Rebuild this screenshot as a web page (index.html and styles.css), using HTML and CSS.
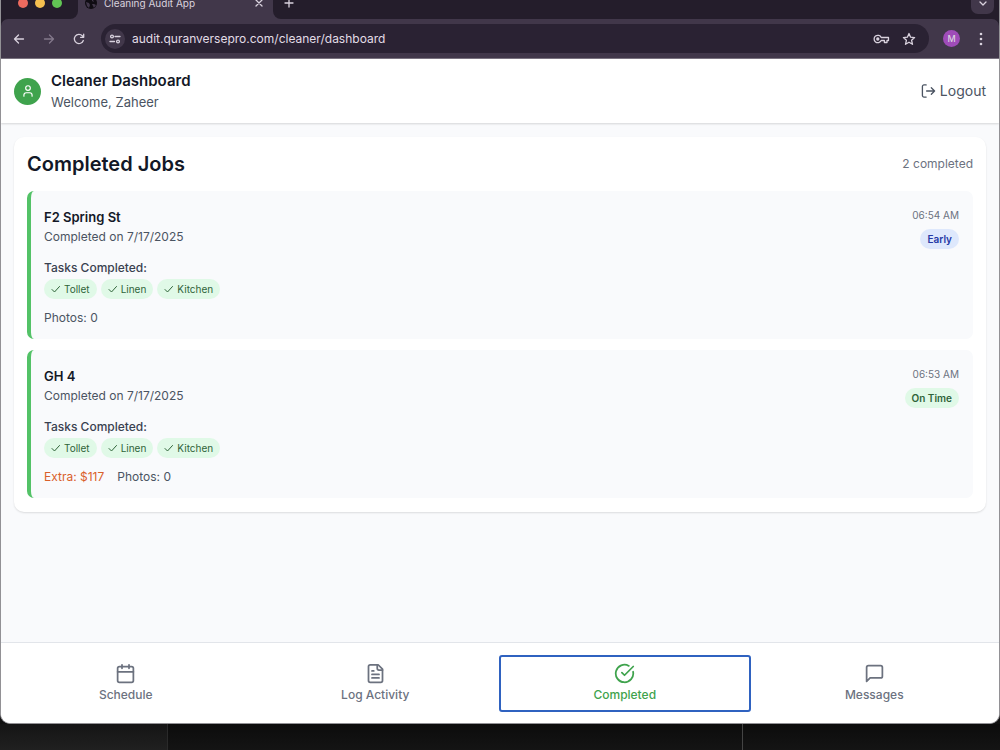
FILE: index.html
```html
<!DOCTYPE html>
<html lang="en">
<head>
    <meta charset="UTF-8">
    <meta name="viewport" content="width=device-width, initial-scale=1.0">
    <title>Cleaning Audit App</title>
    <link rel="stylesheet" href="styles.css">
</head>
<body>
    <div class="window">
        <!-- Browser chrome -->
        <div class="chrome">
            <div class="tabstrip">
                <div class="lights">
                    <span class="light red"></span>
                    <span class="light yellow"></span>
                    <span class="light green"></span>
                </div>
                <div class="tab">
                    <svg class="favicon" viewBox="0 0 14 14"><circle cx="7" cy="7" r="6" fill="#0f0c13"/><path d="M2 6l3 1 1 2-1 3-2-2zM8 1l3 1-2 2 1 2-2-1zM8 8l2 0 2 1-2 3-1-2z" fill="#41374a"/></svg>
                    <span class="tab-title">Cleaning Audit App</span>
                    <button class="tab-btn" aria-label="Close tab"><svg width="10" height="10" viewBox="0 0 10 10"><path d="M2 2l6 6M8 2l-6 6"/></svg></button>
                </div>
                <div class="strip-rest">
                    <button class="tab-btn" aria-label="New tab"><svg width="12" height="12" viewBox="0 0 12 12"><path d="M6 2v8M2 6h8"/></svg></button>
                    <button class="tab-search" aria-label="Search tabs"><svg width="10" height="10" viewBox="0 0 10 10"><path d="M2 4l3 3 3-3"/></svg></button>
                </div>
            </div>
            <div class="toolbar">
                <button class="tool" aria-label="Back"><svg width="14" height="14" viewBox="0 0 14 14"><path d="M11.500 7H2.500M6.500 3L2.500 7l4 4"/></svg></button>
                <button class="tool dim" aria-label="Forward"><svg width="14" height="14" viewBox="0 0 14 14"><path d="M2.500 7h9M7.500 3l4 4-4 4"/></svg></button>
                <button class="tool" aria-label="Reload"><svg width="14" height="14" viewBox="0 0 14 14"><path d="M11.300 8.500A4.600 4.600 0 1 1 10.300 3.800L11.500 5M11.700 2.200v3.100H8.600"/></svg></button>
                <div class="address">
                    <button class="site-info" aria-label="Site information"><svg width="12" height="12" viewBox="0 0 12 12"><circle cx="3" cy="3.500" r="1.400"/><path d="M6 3.500h5M1 8.500h4.500"/><circle cx="9" cy="8.500" r="1.400"/></svg></button>
                    <input class="url" type="text" aria-label="Address" value="audit.quranversepro.com/cleaner/dashboard">
                    <button class="in-bar" aria-label="Passwords"><svg width="17" height="12" viewBox="0 0 17 12"><path d="M8.200 4.500H15.500v3H14v2h-2.600v-2H8.200a3.700 3.700 0 1 1 0-3z"/><circle cx="4.800" cy="6" r="1" fill="currentColor"/></svg></button>
                    <button class="in-bar" aria-label="Bookmark"><svg width="14" height="14" viewBox="0 0 14 14"><path d="M7 1.500l1.600 3.700 4 .4-3 2.700.9 4L7 10.200l-3.500 2.100.9-4-3-2.700 4-.4z"/></svg></button>
                </div>
                <button class="profile" aria-label="Profile">M</button>
                <button class="menu" aria-label="Menu"><svg width="4" height="14" viewBox="0 0 4 14"><g fill="currentColor" stroke="none"><circle cx="2" cy="2" r="1.300"/><circle cx="2" cy="7" r="1.300"/><circle cx="2" cy="12" r="1.300"/></g></svg></button>
            </div>
        </div>

        <!-- Page header -->
        <header class="header">
            <div class="avatar"><svg width="14" height="14" viewBox="0 0 24 24"><path d="M19 21v-2a4 4 0 0 0-4-4H9a4 4 0 0 0-4 4v2"/><circle cx="12" cy="7" r="4"/></svg></div>
            <div class="who">
                <h1>Cleaner Dashboard</h1>
                <p>Welcome, Zaheer</p>
            </div>
            <button class="logout"><svg width="16" height="16" viewBox="0 0 16 16"><path d="M5.500 1.500H3.200a1.700 1.700 0 0 0-1.700 1.700v9.600a1.700 1.700 0 0 0 1.700 1.700H5.500M6 8h8.500M11 4.500L14.500 8 11 11.500"/></svg>Logout</button>
        </header>

        <!-- Completed jobs -->
        <main class="main">
            <section class="card">
                <div class="card-head">
                    <h2>Completed Jobs</h2>
                    <span class="count">2 completed</span>
                </div>

                <article class="job">
                    <div class="job-head">
                        <div>
                            <h3>F2 Spring St</h3>
                            <p>Completed on 7/17/2025</p>
                        </div>
                        <div class="job-status">
                            <span class="time">06:54 AM</span>
                            <span class="badge early">Early</span>
                        </div>
                    </div>
                    <p class="tasks-label">Tasks Completed:</p>
                    <ul class="tasks">
                        <li><svg width="10" height="10" viewBox="0 0 10 10"><path d="M1 5.500L3.500 8 8.500 2.500"/></svg>Tollet</li>
                        <li><svg width="10" height="10" viewBox="0 0 10 10"><path d="M1 5.500L3.500 8 8.500 2.500"/></svg>Linen</li>
                        <li><svg width="10" height="10" viewBox="0 0 10 10"><path d="M1 5.500L3.500 8 8.500 2.500"/></svg>Kitchen</li>
                    </ul>
                    <div class="job-foot">
                        <span>Photos: 0</span>
                    </div>
                </article>

                <article class="job">
                    <div class="job-head">
                        <div>
                            <h3>GH 4</h3>
                            <p>Completed on 7/17/2025</p>
                        </div>
                        <div class="job-status">
                            <span class="time">06:53 AM</span>
                            <span class="badge on-time">On Time</span>
                        </div>
                    </div>
                    <p class="tasks-label">Tasks Completed:</p>
                    <ul class="tasks">
                        <li><svg width="10" height="10" viewBox="0 0 10 10"><path d="M1 5.500L3.500 8 8.500 2.500"/></svg>Tollet</li>
                        <li><svg width="10" height="10" viewBox="0 0 10 10"><path d="M1 5.500L3.500 8 8.500 2.500"/></svg>Linen</li>
                        <li><svg width="10" height="10" viewBox="0 0 10 10"><path d="M1 5.500L3.500 8 8.500 2.500"/></svg>Kitchen</li>
                    </ul>
                    <div class="job-foot">
                        <span class="extra">Extra: $117</span>
                        <span>Photos: 0</span>
                    </div>
                </article>
            </section>
        </main>

        <!-- Bottom navigation -->
        <nav class="bottom-nav">
            <button class="nav-item"><svg width="21" height="21" viewBox="0 0 24 24"><path d="M8 2v4M16 2v4M3 10h18"/><rect x="3" y="4" width="18" height="18" rx="2"/></svg>Schedule</button>
            <button class="nav-item"><svg width="21" height="21" viewBox="0 0 24 24"><path d="M15 2H6a2 2 0 0 0-2 2v16a2 2 0 0 0 2 2h12a2 2 0 0 0 2-2V7z"/><path d="M14 2v4a2 2 0 0 0 2 2h4M10 9H8M16 13H8M16 17H8"/></svg>Log Activity</button>
            <button class="nav-item active"><svg width="21" height="21" viewBox="0 0 24 24"><path d="M21.800 10A10 10 0 1 1 17 3.340"/><path d="M9 11l3 3L22 4"/></svg>Completed</button>
            <button class="nav-item"><svg width="21" height="21" viewBox="0 0 24 24"><path d="M21 15a2 2 0 0 1-2 2H7l-4 4V5a2 2 0 0 1 2-2h14a2 2 0 0 1 2 2z"/></svg>Messages</button>
        </nav>
    </div>

    <!-- Windows behind the browser -->
    <div class="desktop">
        <div class="pane side"></div>
        <div class="pane"></div>
        <div class="pane last"></div>
    </div>
</body>
</html>
```
FILE: styles.css
```css
* {
    box-sizing: border-box;
}
body {
    margin: 0;
    min-height: 100vh;
    display: flex;
    flex-direction: column;
    font-family: Inter, "Liberation Sans", sans-serif;
    background: #111111;
}
h1, h2, h3, p, ul {
    margin: 0;
    padding: 0;
}
button {
    display: flex;
    align-items: center;
    justify-content: center;
    padding: 0;
    border: none;
    background: none;
    color: inherit;
    font-family: inherit;
    cursor: pointer;
}
svg {
    flex-shrink: 0;
    fill: none;
    stroke: currentColor;
    stroke-width: 2;
    stroke-linecap: round;
    stroke-linejoin: round;
}
.window {
    flex: 1;
    display: flex;
    flex-direction: column;
    overflow: hidden;
    border: 1px solid #929195;
    border-top: none;
    border-radius: 0 0 10px 10px;
    background: #f9fafc;
}

/* Browser chrome */
.chrome {
    background: #241d2b;
    color: #d9d2de;
    border-bottom: 1px solid #7a7380;
}
.chrome svg {
    stroke-width: 1.3;
}
.tabstrip {
    display: flex;
    align-items: flex-end;
    height: 19px;
    overflow: hidden;
    background: linear-gradient(90deg, #241d2b 20px, #41374a 20px, #41374a 60%, #241d2b 60%);
}
.lights, .tab, .strip-rest {
    display: flex;
    align-items: center;
    height: 32px;
}
.lights {
    width: 77px;
    padding-left: 17px;
    gap: 7px;
    background: #241d2b;
    border-bottom-right-radius: 8px;
}
.light {
    width: 10px;
    height: 10px;
    border-radius: 50%;
}
.red {
    background: #ed6a5e;
}
.yellow {
    background: #f5bf4f;
}
.green {
    background: #61c554;
}
.tab {
    width: 195px;
    padding: 0 8px 0 6px;
    gap: 6px;
    background: #41374a;
}
.chrome .favicon {
    width: 14px;
    height: 14px;
    stroke: none;
}
.tab-title {
    flex: 1;
    font-size: 10px;
    line-height: 14px;
    white-space: nowrap;
}
.tab-btn {
    width: 12px;
    height: 12px;
}
.strip-rest {
    flex: 1;
    justify-content: space-between;
    padding: 0 5px 0 10px;
    background: #241d2b;
    border-bottom-left-radius: 8px;
}
.tab-search {
    width: 23px;
    height: 22px;
    border-radius: 7px;
    background: #41374a;
}
.toolbar {
    display: flex;
    align-items: center;
    height: 39px;
    padding: 0 10px 0 3px;
    border-radius: 7px 7px 0 0;
    background: #41374a;
}
.tool {
    width: 30px;
    height: 28px;
}
.dim {
    color: #83798b;
}
.address {
    flex: 1;
    display: flex;
    align-items: center;
    height: 29px;
    margin: 0 14px 0 7px;
    padding: 0 13px 0 4px;
    border-radius: 15px;
    background: #2a2233;
}
.site-info {
    width: 20px;
    height: 20px;
    border-radius: 50%;
    background: #41374a;
}
.url {
    flex: 1;
    min-width: 0;
    padding: 0 7px;
    border: none;
    outline: none;
    background: none;
    color: #e2dde6;
    font-family: inherit;
    font-size: 12px;
}
.in-bar {
    margin-left: 12px;
}
.profile {
    width: 17px;
    height: 17px;
    border-radius: 50%;
    background: #9f4cb8;
    font-size: 9px;
    font-weight: 500;
}
.menu {
    width: 16px;
    height: 20px;
    margin-left: 13px;
}

/* Page header */
.header {
    display: flex;
    align-items: center;
    gap: 10px;
    padding: 11px 13px;
    background: #ffffff;
    box-shadow: 0 1px 2px rgba(0, 0, 0, 0.15);
}
.avatar {
    display: flex;
    align-items: center;
    justify-content: center;
    width: 27px;
    height: 27px;
    border-radius: 50%;
    background: #3fa34d;
    color: #ffffff;
}
.who {
    flex: 1;
}
h1 {
    font-size: 15px;
    font-weight: 600;
    line-height: 22px;
    color: #131827;
}
.who p {
    font-size: 13px;
    line-height: 20px;
    color: #4b5462;
}
.logout {
    gap: 4px;
    font-size: 14px;
    line-height: 20px;
    color: #4b5462;
}
.logout svg {
    width: 15px;
    stroke-width: 1.4;
}

/* Completed jobs */
.main {
    flex: 1;
    padding: 14px 13px;
}
.card {
    display: flex;
    flex-direction: column;
    gap: 11px;
    padding: 13px 13px 14px;
    border-radius: 10px;
    background: #ffffff;
    box-shadow: 0 1px 2px rgba(0, 0, 0, 0.12);
}
.card-head {
    display: flex;
    align-items: center;
    justify-content: space-between;
    padding-bottom: 2px;
}
h2 {
    font-size: 20px;
    font-weight: 600;
    line-height: 28px;
    color: #131827;
}
.count {
    font-size: 12px;
    line-height: 18px;
    color: #6c727f;
}
.job {
    padding: 16px 14px 12px 13px;
    border-left: 4px solid #53c267;
    border-radius: 7px;
    background: #f9fafc;
    font-size: 12px;
    line-height: 18px;
    color: #4b5462;
}
.job-head {
    display: flex;
    align-items: flex-start;
    justify-content: space-between;
    margin-bottom: 10px;
}
h3 {
    font-size: 13px;
    font-weight: 600;
    line-height: 21px;
    color: #131827;
}
.job-status {
    display: flex;
    flex-direction: column;
    align-items: flex-end;
    gap: 6px;
}
.time {
    font-size: 10px;
    line-height: 16px;
    color: #6c727f;
}
.badge {
    padding: 0 7px;
    border-radius: 10px;
    font-size: 10px;
    font-weight: 600;
    line-height: 20px;
}
.early {
    background: #dee8fc;
    color: #263aa5;
}
.on-time {
    background: #e0f9e7;
    color: #2f6439;
}
.tasks-label {
    margin-bottom: 2px;
    font-weight: 500;
    color: #394150;
}
.tasks {
    display: flex;
    gap: 4px;
    margin-bottom: 10px;
    list-style: none;
}
.tasks li {
    display: flex;
    align-items: center;
    gap: 3px;
    padding: 0 7px;
    border-radius: 10px;
    background: #e0f9e7;
    color: #2f6439;
    font-size: 10px;
    line-height: 20px;
}
.tasks svg {
    stroke-width: 1;
}
.job-foot {
    display: flex;
    gap: 13px;
}
.extra {
    color: #d9602b;
}

/* Bottom navigation */
.bottom-nav {
    display: grid;
    grid-template-columns: repeat(4, 1fr);
    padding: 13px 0 12px;
    border-top: 1px solid #e2e5ea;
    background: #ffffff;
}
.nav-item {
    flex-direction: column;
    gap: 2px;
    padding: 7px 0;
    border-radius: 2px;
    font-size: 12px;
    font-weight: 500;
    line-height: 18px;
    color: #6c727f;
}
.active {
    color: #3fa34d;
    outline: 2px solid #2f62c0;
    outline-offset: -1px;
}

/* Windows behind the browser */
.desktop {
    display: grid;
    grid-template-columns: 168px 575px 1fr;
    height: 26px;
}
.pane {
    border-right: 1px solid #444444;
    background: linear-gradient(#0c0c0c, #141414);
}
.side {
    border-color: #2a2a2a;
    background: linear-gradient(#151515, #202020);
}
.last {
    border: none;
}
```
